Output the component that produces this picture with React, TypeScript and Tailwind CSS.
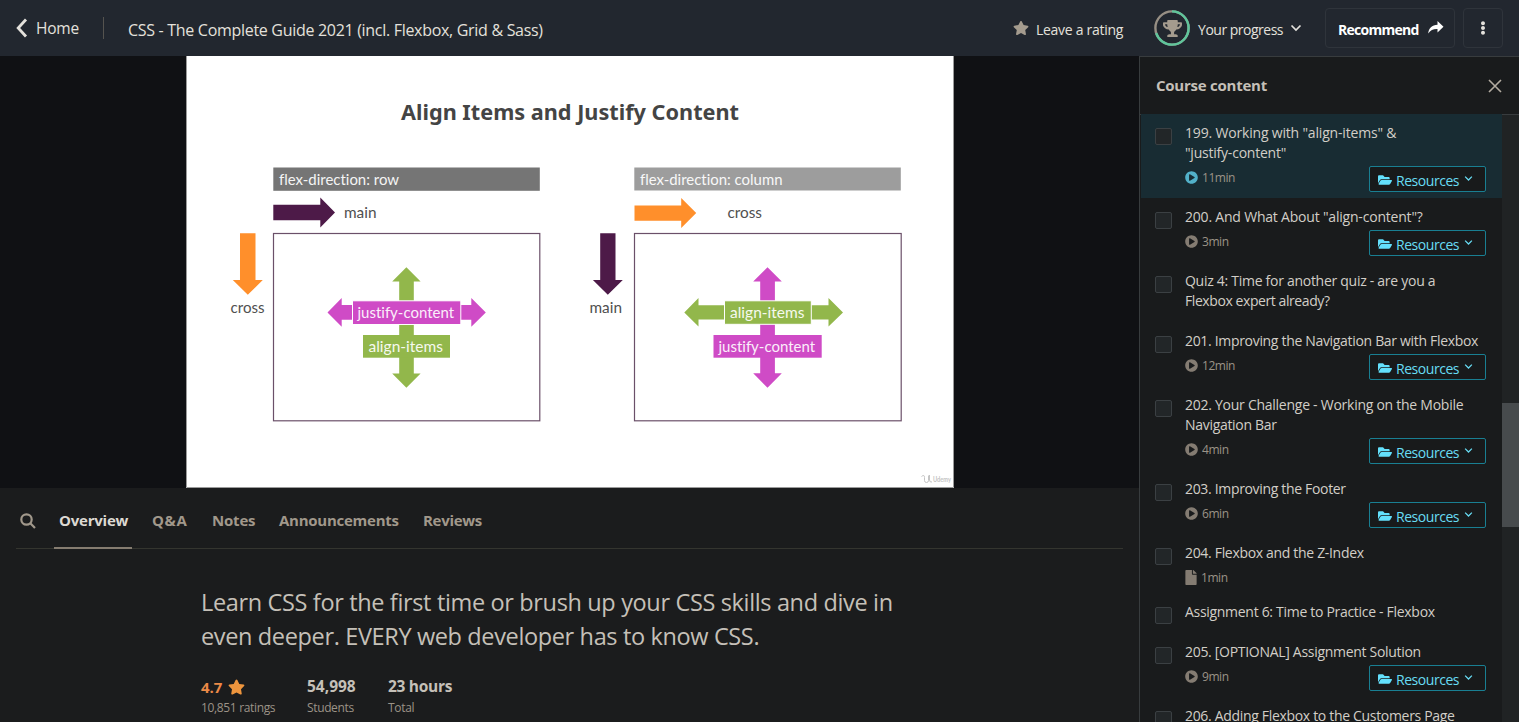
import React from "react";
import { FaStar, FaTrophy, FaEllipsisV, FaFolderOpen, FaPlayCircle, FaFile } from "react-icons/fa";

type Kind = "video" | "file";
type Item = { lines: string[]; spacing: string[]; time?: string; kind?: Kind; resources?: boolean; active?: boolean; height: string };

const items: Item[] = [
  { lines: ['199. Working with "align-items" &', '"justify-content"'], spacing: ["tracking-[-0.18px]", "tracking-[-0.22px]"], time: "11min", kind: "video", resources: true, active: true, height: "h-[84px]" },
  { lines: ['200. And What About "align-content"?'], spacing: ["tracking-[-0.2px]"], time: "3min", kind: "video", resources: true, height: "h-16" },
  { lines: ["Quiz 4: Time for another quiz - are you a", "Flexbox expert already?"], spacing: ["tracking-[-0.28px]", "tracking-[-0.42px]"], height: "h-[60px]" },
  { lines: ["201. Improving the Navigation Bar with Flexbox"], spacing: ["tracking-[-0.32px]"], time: "12min", kind: "video", resources: true, height: "h-16" },
  { lines: ["202. Your Challenge - Working on the Mobile", "Navigation Bar"], spacing: ["tracking-[-0.26px]", "tracking-[-0.3px]"], time: "4min", kind: "video", resources: true, height: "h-[84px]" },
  { lines: ["203. Improving the Footer"], spacing: ["tracking-[-0.33px]"], time: "6min", kind: "video", resources: true, height: "h-16" },
  { lines: ["204. Flexbox and the Z-Index"], spacing: ["tracking-[-0.32px]"], time: "1min", kind: "file", height: "h-[59px]" },
  { lines: ["Assignment 6: Time to Practice - Flexbox"], spacing: ["tracking-[-0.3px]"], height: "h-10" },
  { lines: ["205. [OPTIONAL] Assignment Solution"], spacing: ["tracking-[-0.3px]"], time: "9min", kind: "video", resources: true, height: "h-16" },
  { lines: ["206. Adding Flexbox to the Customers Page"], spacing: ["tracking-[-0.32px]"], height: "h-16" },
];

function Chevron({ className }: { className: string }) {
  return (
    <svg viewBox="0 0 12 12" className={className} fill="none" stroke="currentColor" strokeWidth="1.7">
      <path d="M1.5 3.5 6 8l4.5-4.5" />
    </svg>
  );
}

function Header() {
  return (
    <header className="flex h-14 shrink-0 items-center bg-[#22272f] text-[#e4e1dc]">
      <svg viewBox="0 0 12 20" className="ml-4 h-5 w-3" fill="none" stroke="currentColor" strokeWidth="2.8">
        <path d="M10 1.500 2.200 10l7.800 8.500" />
      </svg>
      <span className="ml-2 pt-px text-[15.500px] tracking-[-0.2px]">Home</span>
      <span className="ml-6 h-[22px] w-px bg-[#55534f]" />
      <span className="ml-6 pt-1 text-[16px] tracking-[-0.3px]">CSS - The Complete Guide 2021 (incl. Flexbox, Grid &amp; Sass)</span>
      <div className="ml-auto flex items-center pr-4">
        <FaStar className="h-4 w-4 text-[#a49b8e]" />
        <span className="ml-[7px] pt-[2px] text-[14px] tracking-[-0.28px]">Leave a rating</span>
        <div className="ml-[31px] grid h-9 w-9 place-items-center">
          <svg viewBox="0 0 36 36" className="col-start-1 row-start-1 h-9 w-9" fill="none" strokeWidth="2.4">
            <circle cx="18" cy="18" r="16.6" stroke="#978f84" />
            <circle cx="18" cy="18" r="16.6" stroke="#5fc59b" pathLength="100" strokeDasharray="70 30" transform="rotate(-90 18 18)" />
          </svg>
          <FaTrophy className="col-start-1 row-start-1 h-[19px] w-[19px] text-[#a49b8e]" />
        </div>
        <span className="ml-2 pt-[2px] text-[14px] tracking-[-0.5px]">Your progress</span>
        <Chevron className="ml-[7px] h-3 w-3" />
        <button className="ml-[23px] flex h-10 w-[130px] items-center rounded-[4px] border border-[#2f343b] pl-3 text-[14px] font-bold tracking-[-0.72px] text-white">
          <span className="pt-[2px]">Recommend</span>
          <svg viewBox="0 0 16 13" className="ml-[9px] mb-px h-[13px] w-4" fill="currentColor">
            <path d="M9.500 0 15.500 5.800 9.500 11.400V8C5.500 7.800 2.500 9 .2 12.600.6 7.400 4 3.900 9.500 3.700z" />
          </svg>
        </button>
        <button className="ml-2 flex h-10 w-10 items-center justify-center rounded-[4px] border border-[#2f343b]">
          <FaEllipsisV className="h-[14px] w-[14px]" />
        </button>
      </div>
    </header>
  );
}

function Slide() {
  return (
    <svg viewBox="186 56 768 432" className="h-[432px] w-[768px] bg-white [font-variant-ligatures:none]" fontFamily="Lato, sans-serif" fontSize="15">
      <text x="401" y="120" fontFamily="'Noto Sans', sans-serif" fontSize="22" fontWeight="700" fill="#444" textLength="338" lengthAdjust="spacingAndGlyphs">Align Items and Justify Content</text>

      <rect x="273.3" y="167.5" width="266.5" height="23.3" fill="#757575" />
      <text x="279" y="184.5" fill="#f4f4f4" textLength="120" lengthAdjust="spacingAndGlyphs">flex-direction: row</text>
      <path d="M273.3 204.7h47v-7.3l14.7 15-14.7 15v-7.2h-47z" fill="#4d1a48" />
      <text x="344" y="217.5" fill="#505050" textLength="32.500" lengthAdjust="spacingAndGlyphs">main</text>
      <path d="M240 233.300h15.500v46.700h7.300l-15 14.800-15-14.800h7.200z" fill="#ff8f2b" />
      <text x="230.500" y="313.300" fill="#505050" textLength="34" lengthAdjust="spacingAndGlyphs">cross</text>
      <rect x="273.500" y="233.500" width="266.300" height="187.300" fill="none" stroke="#6b5069" strokeWidth="1.200" />
      <path d="M406.400 267.300l14.200 14.200h-6.800v92h6.800l-14.200 14.200-14.200-14.200h7v-92h-7z" fill="#92b74b" />
      <path d="M327.500 312.500l14.200-14.400v7h129.600v-7l14.500 14.400-14.500 14.200v-7H341.700v7z" fill="#cf4bc6" />
      <rect x="352.500" y="300.800" width="108.300" height="23.700" fill="#cf4bc6" stroke="#fff" />
      <text x="357.500" y="318.300" fill="#fbeefa" textLength="96.500" lengthAdjust="spacingAndGlyphs">justify-content</text>
      <rect x="363" y="335" width="87" height="22.700" fill="#92b74b" />
      <text x="368.500" y="351.700" fill="#f6f9ee" textLength="74.500" lengthAdjust="spacingAndGlyphs">align-items</text>

      <rect x="634.300" y="167.500" width="266.500" height="23" fill="#9d9d9d" />
      <text x="640" y="184.500" fill="#f8f8f8" textLength="142.500" lengthAdjust="spacingAndGlyphs">flex-direction: column</text>
      <path d="M634.500 205.400h46.700v-7.300l15 14.900-15 15v-7.300h-46.700z" fill="#ff8f2b" />
      <text x="727.500" y="218.300" fill="#505050" textLength="34.500" lengthAdjust="spacingAndGlyphs">cross</text>
      <path d="M600.200 233.300h15.300v46.600h7.300l-15 14.900-14.900-14.900h7.300z" fill="#4d1a48" />
      <text x="589.500" y="313.300" fill="#505050" textLength="32.500" lengthAdjust="spacingAndGlyphs">main</text>
      <rect x="634.500" y="233.500" width="266.700" height="187.300" fill="none" stroke="#6b5069" strokeWidth="1.200" />
      <path d="M767.500 267.300l14.300 14.300h-6.900v91.700h6.900l-14.300 14.500-14.300-14.500h7v-91.700h-7z" fill="#cf4bc6" />
      <path d="M684.300 312.500l14.200-14.400v7.100h130v-7.100l14.500 14.400-14.500 14.100v-7h-130v7z" fill="#92b74b" />
      <rect x="724.500" y="300.800" width="86.800" height="23.500" fill="#92b74b" stroke="#fff" />
      <text x="730" y="318.300" fill="#f6f9ee" textLength="74.500" lengthAdjust="spacingAndGlyphs">align-items</text>
      <rect x="713.500" y="335" width="108.200" height="22.700" fill="#cf4bc6" />
      <text x="718.500" y="351.700" fill="#fbeefa" textLength="96.500" lengthAdjust="spacingAndGlyphs">justify-content</text>

      <g stroke="#c4c4c4" fill="none">
        <path d="M921.500 476.500q3-2.500 3 1v3q0 2 2 2t2-2v-5M929.500 475v5q0 2.500 2.500 2" />
      </g>
      <text x="933" y="482" fontSize="7" fill="#c4c4c4" fontWeight="700" textLength="18" lengthAdjust="spacingAndGlyphs">Udemy</text>
      <path d="M186.500 56v431.500H953.500V56" fill="none" stroke="#9b9b9b" />
    </svg>
  );
}

function Tabs() {
  return (
    <nav className="mx-4 flex h-[61px] border-b border-[#34352f] text-[15px] font-bold text-[#a1988b]">
      <svg viewBox="0 0 16 16" className="ml-1 mt-[25px] h-4 w-4" fill="none" stroke="currentColor" strokeWidth="2.2">
        <circle cx="6.500" cy="6.500" r="5.200" />
        <path d="m10.300 10.300 4.700 4.700" />
      </svg>
      <div className="ml-[18px] mb-[-1px] h-[61px] w-[78px] border-b-2 border-[#857c70] pl-[5px] pt-[21px] tracking-[-0.22px] text-[#ddd9d2]">Overview</div>
      <span className="ml-5 w-[37px] pt-[21px] tracking-[0.6px]">Q&amp;A</span>
      <span className="ml-[23px] w-[44px] pt-[21px] tracking-[-0.2px]">Notes</span>
      <span className="ml-[23px] w-[120px] pt-[21px] tracking-[-0.26px]">Announcements</span>
      <span className="ml-6 pt-[21px] tracking-[-0.3px]">Reviews</span>
    </nav>
  );
}

function Overview() {
  return (
    <section className="pl-[201px] text-[#c5c0b8]">
      <h1 className="pt-[37px] text-[23.500px] leading-[33.500px]">
        <span className="block tracking-[-0.35px]">Learn CSS for the first time or brush up your CSS skills and dive in</span>
        <span className="block tracking-[-0.36px]">even deeper. EVERY web developer has to know CSS.</span>
      </h1>
      <div className="mt-[22px] flex text-[12px] leading-4 text-[#9b9387]">
        <div className="w-[106px]">
          <div className="flex h-[25px] items-center pb-px text-[15px] font-bold text-[#ec8a47]">
            4.7 <FaStar className="ml-[6px] h-4 w-[17px] text-[#ee953d]" />
          </div>
          <span className="tracking-[-0.34px]">10,851 ratings</span>
        </div>
        <div className="w-[81px]">
          <div className="h-[25px] text-[15.500px] font-bold leading-[22px] tracking-[0px] text-[#c5c0b8]">54,998</div>
          <span className="tracking-[-0.36px]">Students</span>
        </div>
        <div>
          <div className="h-[25px] text-[15.500px] font-bold leading-[22px] tracking-[-0.3px] text-[#c5c0b8]">23 hours</div>
          <span className="tracking-[-0.3px]">Total</span>
        </div>
      </div>
    </section>
  );
}

function Lecture({ item }: { item: Item }) {
  return (
    <li className={`flex shrink-0 pl-[14px] ${item.height} ${item.active ? "bg-[#182c33]" : ""}`}>
      <span className="mt-[14px] h-[17px] w-[17px] shrink-0 rounded-[2px] border border-[#3b4043] bg-[#222628]" />
      <div className="ml-[13px] flex-1 pt-[9px]">
        {item.lines.map((line, i) => (
          <p key={line} className={`h-5 whitespace-nowrap text-[14px] leading-5 text-[#d2cec7] ${item.spacing[i]}`}>{line}</p>
        ))}
        {item.time && (
          <div className="flex h-7 pr-4 text-[12px] text-[#9b9387]">
            {item.kind === "file" ? <FaFile className="mt-[7px] h-[15px] w-3 text-[#847c72]" /> : <FaPlayCircle className={`mt-2 h-[13px] w-[13px] ${item.active ? "text-[#52b1c9]" : "text-[#847c72]"}`} />}
            <span className="ml-1 pt-[7px] leading-4 tracking-[-0.45px]">{item.time}</span>
            {item.resources && (
              <button className="ml-auto mt-[3px] flex h-[26px] w-[117px] items-center rounded-[2px] border border-[#197f92] bg-[#181a1b] pl-2 text-[14px] text-[#68dcf3]">
                <FaFolderOpen className="mt-[2px] h-[14px] w-[14px] text-[#63e0fc]" />
                <span className="ml-1 pt-[2px] tracking-[-0.45px]">Resources</span>
                <Chevron className="ml-[5px] mb-px h-[9px] w-[9px]" />
              </button>
            )}
          </div>
        )}
      </div>
    </li>
  );
}

export default function App() {
  return (
    <div className="flex h-[722px] w-[1519px] flex-col overflow-hidden bg-[#1b1c1d] font-['Open_Sans',sans-serif]">
      <Header />
      <div className="flex min-h-0 flex-1">
        <main className="w-[1139px]">
          <div className="flex h-[432px] bg-[#101114] pl-[186px]">
            <Slide />
          </div>
          <Tabs />
          <Overview />
        </main>
        <aside className="flex w-[380px] flex-col border-l border-t border-[#383c3e] bg-[#191b1c]">
          <div className="flex h-[58px] shrink-0 items-center border-b border-[#383c3e] pl-4 pr-[17px]">
            <h2 className="text-[15px] font-bold tracking-[-0.24px] text-[#c5c0b8]">Course content</h2>
            <svg viewBox="0 0 14 14" className="ml-auto h-[14px] w-[14px]" fill="none" stroke="#b3aca1" strokeWidth="1.600">
              <path d="M1 1l12 12M13 1 1 13" />
            </svg>
          </div>
          <div className="flex min-h-0 flex-1">
            <ul className="mt-[-1px] flex w-[362px] flex-col overflow-hidden pl-px">
              {items.map((item) => (
                <Lecture key={item.lines[0]} item={item} />
              ))}
            </ul>
            <div className="flex-1 bg-[#202324] pt-[288px]">
              <div className="h-[124px] bg-[#474b4d]" />
            </div>
          </div>
        </aside>
      </div>
    </div>
  );
}
